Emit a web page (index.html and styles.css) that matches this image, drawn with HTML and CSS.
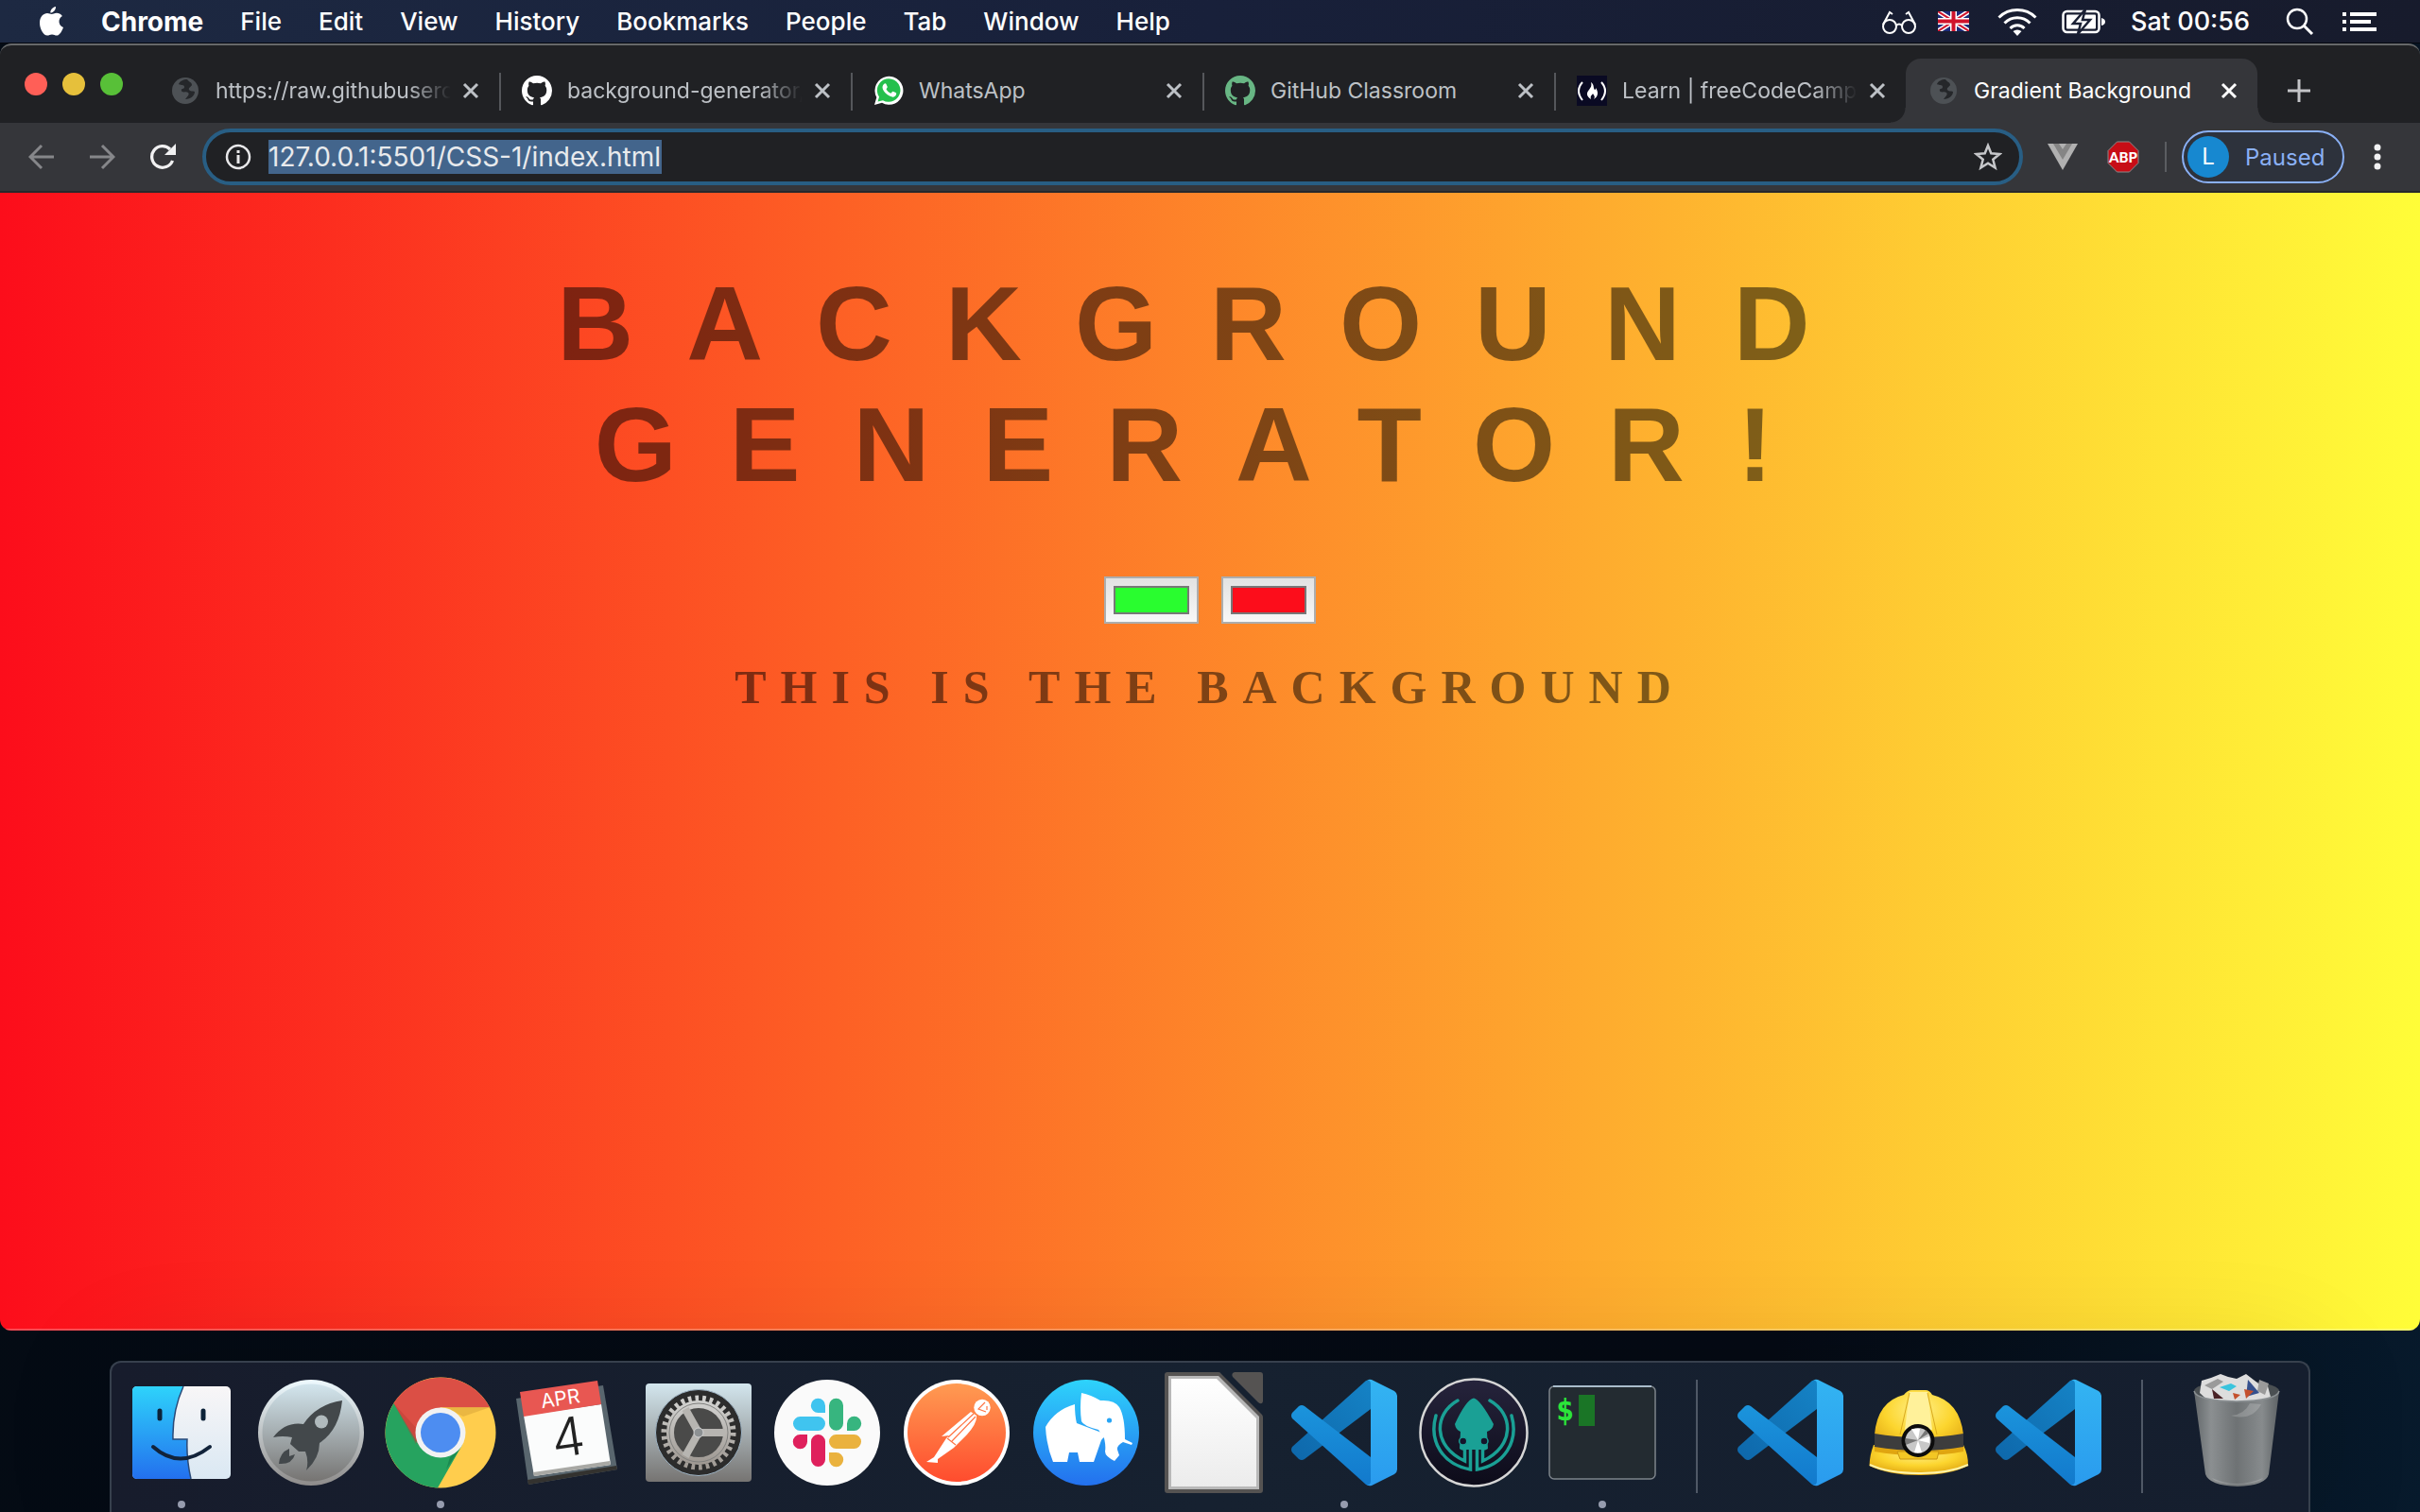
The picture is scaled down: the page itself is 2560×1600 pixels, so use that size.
FILE: index.html
```html
<!DOCTYPE html>
<html lang="en">
<head>
<meta charset="utf-8">
<title>Gradient Background</title>
<link rel="stylesheet" href="styles.css">
</head>
<body>
<svg class="defs" aria-hidden="true">
  <defs>
    <linearGradient id="steel" x1="0" y1="0" x2="0" y2="1"><stop offset="0" stop-color="#d3e6ee"/><stop offset="1" stop-color="#767472"/></linearGradient>
    <linearGradient id="steelRim" x1="0" y1="0" x2="0" y2="1"><stop offset="0" stop-color="#eefaff"/><stop offset="1" stop-color="#8e8c8b"/></linearGradient>
    <linearGradient id="finderBlue" x1="0" y1="0" x2="0" y2="1"><stop offset="0" stop-color="#2ed3fb"/><stop offset="1" stop-color="#2370ee"/></linearGradient>
    <linearGradient id="finderWhite" x1="0" y1="0" x2="0" y2="1"><stop offset="0" stop-color="#f8f6f7"/><stop offset="1" stop-color="#dae8f3"/></linearGradient>
    <linearGradient id="orange" x1="0" y1="0" x2="0" y2="1"><stop offset="0" stop-color="#ff9b52"/><stop offset="1" stop-color="#ff4c2e"/></linearGradient>
    <linearGradient id="codeBack" x1="1" y1="0" x2="0" y2="1"><stop offset="0" stop-color="#1583c6"/><stop offset="1" stop-color="#0e67aa"/></linearGradient>
    <linearGradient id="codeFront" x1="0" y1="0" x2="0" y2="1"><stop offset="0" stop-color="#1b94dc"/><stop offset="1" stop-color="#1279cc"/></linearGradient>
    <linearGradient id="codeSide" x1="0" y1="0" x2="0" y2="1"><stop offset="0" stop-color="#33b4f2"/><stop offset="1" stop-color="#2a9bee"/></linearGradient>
    <linearGradient id="night" x1="0" y1="0" x2="0" y2="1"><stop offset="0" stop-color="#26243c"/><stop offset="1" stop-color="#0c0b19"/></linearGradient>
    <radialGradient id="helmet" cx=".5" cy=".3" r=".7"><stop offset="0" stop-color="#fff08a"/><stop offset=".55" stop-color="#fcd52e"/><stop offset="1" stop-color="#e0a510"/></radialGradient>
    <linearGradient id="bin" x1="0" y1="0" x2="1" y2="0"><stop offset="0" stop-color="#62676a"/><stop offset=".2" stop-color="#8b8f91"/><stop offset=".5" stop-color="#6e7274"/><stop offset=".8" stop-color="#878b8d"/><stop offset="1" stop-color="#5d6265"/></linearGradient>
    <linearGradient id="paper" x1="0" y1="0" x2="0" y2="1"><stop offset="0" stop-color="#fff"/><stop offset="1" stop-color="#ececec"/></linearGradient>
    <linearGradient id="gear" x1="0" y1="0" x2="0" y2="1"><stop offset="0" stop-color="#d0d0ce"/><stop offset="1" stop-color="#a09a94"/></linearGradient>
    <symbol id="globe" viewBox="0 0 32 32"><circle cx="16" cy="16" r="14" fill="currentColor"/><path class="globe-land" d="M18 4c-4 0-8 2-9 5 2 2 6 0 6 3s-4 1-3 4 5 0 7 2-1 4-3 7c6 0 10-4 10-8-2-1-5 0-6-2s2-3 3-5c0-3-3-3-5-6z"/></symbol>
    <symbol id="octocat" viewBox="0 0 16 16"><path fill="currentColor" d="M8 0C3.58 0 0 3.58 0 8c0 3.54 2.29 6.53 5.47 7.59.4.07.55-.17.55-.38 0-.19-.01-.82-.01-1.49-2.01.37-2.53-.49-2.69-.94-.09-.23-.48-.94-.82-1.13-.28-.15-.68-.52-.01-.53.63-.01 1.08.58 1.23.82.72 1.21 1.87.87 2.33.66.07-.52.28-.87.51-1.07-1.78-.2-3.64-.89-3.64-3.95 0-.87.31-1.59.82-2.15-.08-.2-.36-1.02.08-2.12 0 0 .67-.21 2.2.82.64-.18 1.32-.27 2-.27s1.36.09 2 .27c1.53-1.04 2.2-.82 2.2-.82.44 1.1.16 1.92.08 2.12.51.56.82 1.27.82 2.15 0 3.07-1.87 3.75-3.65 3.95.29.25.54.73.54 1.48 0 1.07-.01 1.93-.01 2.2 0 .21.15.46.55.38A8.01 8.01 0 0 0 16 8c0-4.42-3.58-8-8-8z"/></symbol>
    <symbol id="cross" viewBox="0 0 20 20"><path d="M3 3l14 14M17 3L3 17" stroke="currentColor" stroke-width="3"/></symbol>
    <symbol id="vscode" viewBox="0 0 128 128">
      <path fill="url(#codeBack)" d="M87 9L9 79q-2 3 0 6l7 7q3 2 6 0l70-53V8z"/>
      <path fill="url(#codeFront)" d="M22 36q-3-2-6 0l-7 7q-2 3 0 6l78 70q3 2 5 0V90z"/>
      <path fill="url(#codeSide)" d="M88 9q2-2 5-1l24 12q3 2 3 5v78q0 3-3 5l-24 12q-3 1-5-1 4 1 4-4V13q0-5-4-4z"/>
    </symbol>
  </defs>
</svg>

<header class="menubar">
  <nav class="menus" aria-label="Menu bar">
    <svg class="apple" viewBox="0 0 27 33"><path fill="#fff" d="M18 1c.3 3-2.600 6.500-5.600 6.600C12 4.600 15 1.300 18 1zM13.500 9c1.400 0 3-1.300 5.500-1.300 2 0 4.400 1 5.900 3.200-5 2.800-4.300 9.900 1.100 12-1.200 3.500-4 8.600-7 8.700-2 0-2.700-1.200-5-1.200s-3.100 1.200-5 1.200C5 31.600 1 24.500 1 18.200 1 11.500 5.200 8 9 8c2 0 3.500 1 4.500 1z"/></svg>
    <a href="#" class="app">Chrome</a><a href="#">File</a><a href="#">Edit</a><a href="#">View</a><a href="#">History</a><a href="#">Bookmarks</a><a href="#">People</a><a href="#">Tab</a><a href="#">Window</a><a href="#">Help</a>
  </nav>
  <div class="status">
    <svg width="38" height="28" viewBox="0 0 38 28" fill="none" stroke="#fff" stroke-width="2"><circle cx="9" cy="19" r="7"/><circle cx="29" cy="19" r="7"/><path d="M16 18q3-3 6 0M2 17L9 4l3 2M36 17L29 4l-3 2"/></svg>
    <svg class="flag" width="33" height="21" viewBox="0 0 33 21"><path fill="#1c2b7a" d="M0 0h33v21H0z"/><path stroke="#fff" stroke-width="5" d="M0 0l33 21M33 0L0 21"/><path stroke="#d0142c" stroke-width="2" d="M0 0l33 21M33 0L0 21"/><path stroke="#fff" stroke-width="7" d="M16.500 0v21M0 10.500h33"/><path stroke="#d0142c" stroke-width="4" d="M16.500 0v21M0 10.500h33"/></svg>
    <svg class="wifi" width="42" height="30" viewBox="0 0 42 30" fill="none" stroke="#fff" stroke-width="3"><path d="M1.500 10.500a28 28 0 0 1 39 0M7.500 16.500a19 19 0 0 1 27 0M13.500 22a10.500 10.500 0 0 1 15 0"/><path fill="#fff" stroke="none" d="M16.500 25q4.500-3 9 0L21 30z"/></svg>
    <svg class="battery" width="46" height="26" viewBox="0 0 46 26"><rect x="1.500" y="2" width="38" height="22" rx="4" fill="none" stroke="#fff" stroke-width="2.500"/><rect x="5" y="5.500" width="31" height="15" rx="1" fill="#fff"/><path fill="#fff" d="M42 9q4 1 4 4t-4 4z"/><path fill="#fff" stroke="#1a2034" stroke-width="2.500" d="M25 0L12 15h8l-3 11L30 11h-8z"/></svg>
    <time>Sat 00:56</time>
    <svg class="search" width="30" height="30" viewBox="0 0 30 30" fill="none" stroke="#fff" stroke-width="2.500"><circle cx="12" cy="12" r="10"/><path d="M19 19l9 9" stroke-width="3"/></svg>
    <svg width="36" height="22" viewBox="0 0 36 22" stroke="#fff" stroke-width="4"><path d="M0 3h4M8 3h28M0 11h4M8 11h22M0 19h4M8 19h28"/></svg>
  </div>
</header>

<main class="window">
  <div class="tabstrip">
    <div class="lights"><button class="red" aria-label="Close window"></button><button class="amber" aria-label="Minimise"></button><button class="green" aria-label="Zoom"></button></div>
    <div class="tab"><svg class="fav globe"><use href="#globe"/></svg><span class="label fade">https://raw.githubuserc</span><button aria-label="Close tab"><svg><use href="#cross"/></svg></button></div>
    <div class="tab"><svg class="fav white"><use href="#octocat"/></svg><span class="label fade">background-generator,</span><button aria-label="Close tab"><svg><use href="#cross"/></svg></button></div>
    <div class="tab"><svg class="fav" viewBox="0 0 32 32"><path fill="#fff" d="M1 31l2.300-8A15 15 0 1 1 9 28.800z"/><path fill="#25c04d" d="M4.500 27.500l1.500-5a12.300 12.300 0 1 1 4 3.700z"/><path fill="#fff" d="M11 9c1-1 2-1 2.500 0l1.200 2.800c.2.500 0 1-1.200 2.400 1 2 2.800 3.600 5 4.500 1.200-1.500 1.600-2.200 2.200-2l3.300 1.600c.6.500 0 3-1.500 3.800-2 1.200-5 .3-8-2-3-2.500-5-5.500-5-7.600 0-1.500.7-2.700 1.500-3.500z"/></svg><span class="label">WhatsApp</span><button aria-label="Close tab"><svg><use href="#cross"/></svg></button></div>
    <div class="tab"><svg class="fav mint"><use href="#octocat"/></svg><span class="label">GitHub Classroom</span><button aria-label="Close tab"><svg><use href="#cross"/></svg></button></div>
    <div class="tab last"><svg class="fav" viewBox="0 0 32 32"><path fill="#0a0a23" d="M0 0h32v32H0z"/><path fill="none" stroke="#fff" stroke-width="2" d="M6 7q-8 9 0 19M26 7q8 9 0 19"/><path fill="#fff" d="M15 7c4 3 2 6 4 8 1 0 1-1 1-2 3 4 3 9-2 12 2-3 0-4-1-6-1 2-3 2-2 6-5-3-5-7-2-10 2-3 3-4 2-8z"/></svg><span class="label fade">Learn | freeCodeCamp</span><button aria-label="Close tab"><svg><use href="#cross"/></svg></button></div>
    <div class="tab active"><svg class="fav globe"><use href="#globe"/></svg><span class="label">Gradient Background</span><button aria-label="Close tab"><svg><use href="#cross"/></svg></button></div>
    <button class="newtab" aria-label="New tab"><svg width="24" height="24" viewBox="0 0 24 24"><path d="M12 0v24M0 12h24" stroke="#c3c4c7" stroke-width="3"/></svg></button>
  </div>

  <div class="toolbar">
    <button class="tool" aria-label="Back"><svg width="28" height="28" viewBox="0 0 28 28" fill="none" stroke="#86878a" stroke-width="3"><path d="M27 14H3M14 2L2 14l12 12"/></svg></button>
    <button class="tool" aria-label="Forward"><svg width="28" height="28" viewBox="0 0 28 28" fill="none" stroke="#86878a" stroke-width="3"><path d="M1 14h24M14 2l12 12-12 12"/></svg></button>
    <button class="tool" aria-label="Reload"><svg width="28" height="28" viewBox="0 0 28 28"><path fill="none" stroke="#f1f1f2" stroke-width="3.300" d="M24.500 18A11.300 11.300 0 1 1 22 6"/><path fill="#f1f1f2" d="M28 0v12H16z"/></svg></button>
    <div class="omnibox">
      <svg class="info" width="28" height="28" viewBox="0 0 28 28"><circle cx="14" cy="14" r="12" fill="none" stroke="#e8e8ea" stroke-width="2.500"/><path d="M14 12v9M14 7v3" stroke="#e8e8ea" stroke-width="3"/></svg>
      <input type="text" aria-label="Address" value="127.0.0.1:5501/CSS-1/index.html">
      <button class="star" aria-label="Bookmark this page"><svg width="30" height="30" viewBox="0 0 30 30"><path fill="none" stroke="#c6c7ca" stroke-width="2.500" d="M15 3l3.300 8.300 9 .7-7 5.800 2.300 8.700L15 21.700l-7.600 4.800 2.300-8.700-7-5.800 9-.7z"/></svg></button>
    </div>
    <button class="tool" aria-label="Vue extension"><svg width="32" height="28" viewBox="0 0 32 28"><path fill="#b1b1b1" d="M0 0h32L16 28z"/><path fill="#858585" d="M6 0h20L16 17z"/><path fill="#b1b1b1" d="M12 0h8l-4 6z"/></svg></button>
    <button class="tool" aria-label="Adblock Plus"><svg width="34" height="34" viewBox="0 0 34 34"><path fill="#c70d16" stroke="#8a8a8a" d="M10.500 1h13L33 10.500v13L23.500 33h-13L1 23.500v-13z"/><text x="17" y="23" text-anchor="middle" class="abp">ABP</text></svg></button>
    <span class="rule"></span>
    <button class="profile"><span class="avatar">L</span><span>Paused</span></button>
    <button class="tool kebab" aria-label="Menu"><svg width="8" height="28" viewBox="0 0 8 28" fill="#f1f1f2"><circle cx="4" cy="4" r="3.500"/><circle cx="4" cy="14" r="3.500"/><circle cx="4" cy="24" r="3.500"/></svg></button>
  </div>

  <section class="page">
    <h1>BACKGROUND GENERATOR!</h1>
    <div class="pickers">
      <input type="color" aria-label="First colour" value="#29fd2f">
      <input type="color" aria-label="Second colour" value="#fc0d1b">
    </div>
    <h3>THIS IS THE BACKGROUND</h3>
  </section>
</main>

<footer class="dock">
  <a href="#" class="app-icon running" aria-label="Finder"><svg viewBox="0 0 128 128"><rect x="12" y="15" width="104" height="98" rx="5" fill="url(#finderWhite)"/><path fill="url(#finderBlue)" d="M17 15h49Q54 42 55 71h15q-1 20 4 42H17q-5 0-5-5V20q0-5 5-5z"/><path fill="none" stroke="#2a4a78" stroke-width="1.500" d="M66 15Q54 42 55 71h15q-1 20 4 42"/><path fill="none" stroke="#0c2238" stroke-width="5" stroke-linecap="round" d="M41 41v8M87 41v8"/><path fill="none" stroke="#12233a" stroke-width="4" stroke-linecap="round" d="M34 79q28 25 60 0"/></svg></a>
  <a href="#" class="app-icon" aria-label="Launchpad"><svg viewBox="0 0 128 128"><circle cx="64" cy="64" r="56" fill="url(#steelRim)"/><circle cx="64" cy="64" r="51.500" fill="url(#steel)"/><path fill="#43484b" d="M97 30Q70 34 56 55 37 52 24 69q10-2 20 0l-2 7 9 8 7 0q4 10 1 20 14-13 14-29Q94 61 97 30z"/><path fill="#43484b" d="M41 81q-10 4-11 16 14 1 17-10l-6 2z"/><circle cx="75" cy="52.500" r="7" fill="#b0babd"/></svg></a>
  <a href="#" class="app-icon running" aria-label="Chrome"><svg viewBox="0 0 128 128"><circle cx="64" cy="64" r="58.500" fill="#ffcd4d"/><path fill="#26a35f" d="M14.500 33A58.500 58.500 0 0 0 61 122.400L87 77 64 64z"/><path fill="#1c8a50" d="M70 103l14.500-22L74 90z"/><path fill="#db4f45" d="M14.500 33A58.500 58.500 0 0 1 116 37.300H64L41 77z"/><path fill="#b93d33" opacity=".45" d="M14.500 33L38 76l3-14z"/><path fill="#d6a137" opacity=".5" d="M70 37.300h46L88 47z"/><circle cx="64" cy="64" r="26.500" fill="#f2f2f2"/><circle cx="64" cy="64" r="21" fill="#4d8df1"/></svg></a>
  <a href="#" class="app-icon" aria-label="Calendar"><svg viewBox="0 0 128 128"><path fill="#59666e" d="M8 28l92-14 15 89-94 16z"/><path fill="#33322f" d="M20 114l94-15 1 4-94 16z"/><path fill="#fbfcfc" d="M16 46l82-12 10 64-81 12z"/><path fill="#a8a8a4" d="M26 106l81-12 1 4-81 12z"/><path fill="#e85752" d="M12 21L94 9l4 25-82 13z"/><g transform="rotate(-8.500 58 50)"><text x="58" y="35" text-anchor="middle" class="cal-month">APR</text><text x="60" y="89" text-anchor="middle" class="cal-day">4</text></g></svg></a>
  <a href="#" class="app-icon" aria-label="System Preferences"><svg viewBox="0 0 128 128"><rect x="8" y="12" width="112" height="104" rx="4" fill="url(#steel)"/><circle cx="64" cy="64" r="45.500" fill="#2c2c2c" stroke="#9fb4c4"/><circle cx="64" cy="64" r="36.500" fill="none" stroke="url(#gear)" stroke-width="6" stroke-dasharray="3.645 4"/><circle cx="64" cy="64" r="30" fill="#4a4a49" stroke="url(#gear)" stroke-width="8"/><circle cx="64" cy="64" r="31" fill="none" stroke="#80807e"/><path stroke="#b7b5b1" stroke-width="8" d="M64 64h28M64 64L50 39M64 64L50 89"/><circle cx="64" cy="64" r="5" fill="#8d9193" stroke="#d2d2d2"/></svg></a>
  <a href="#" class="app-icon" aria-label="Slack"><svg viewBox="0 0 128 128"><circle cx="64" cy="64" r="56" fill="#fafafa"/><path fill="#40c4ef" d="M62 43h-7.500A7.600 7.600 0 1 1 62 35.400zM35.500 47h19a7.500 7.500 0 0 1 0 15h-19a7.500 7.500 0 0 1 0-15z"/><path fill="#37b57f" d="M66 35.300a7.500 7.500 0 0 1 15 0v19a7.500 7.500 0 0 1-15 0zM85 62v-7.500a7.600 7.600 0 1 1 7.600 7.500z"/><path fill="#df205c" d="M43 66v7.500A7.600 7.600 0 1 1 35.400 66zM47 73.500a7.500 7.500 0 0 1 15 0v19a7.500 7.500 0 0 1-15 0z"/><path fill="#eab23e" d="M73.500 66h19a7.500 7.500 0 0 1 0 15h-19a7.500 7.500 0 0 1 0-15zM66 85h7.500a7.600 7.600 0 1 1-7.500 7.600z"/></svg></a>
  <a href="#" class="app-icon" aria-label="Postman"><svg viewBox="0 0 128 128"><circle cx="64" cy="64" r="56" fill="#fff"/><circle cx="64" cy="64" r="52" fill="url(#orange)"/><circle cx="91" cy="37.500" r="8.700" fill="#fff"/><path fill="#fff" d="M79 42l6 4q1 8-10 20L61 80 44 92v4l-12-1 8-5 13-20 3-3-8 1z"/><path fill="none" stroke="#fe7444" stroke-width="1.200" d="M82 44L55 69M84 47L59 73M54 70l9 7M94 32l-7 7 8 3M96 36v4"/></svg></a>
  <a href="#" class="app-icon" aria-label="TablePlus"><svg viewBox="0 0 128 128"><circle cx="64" cy="64" r="56" fill="url(#finderBlue)"/><path fill="#fff" d="M21 58Q31 40 52 34q0 12 2 20l21 8q6 2 10 4l-5 6-8 23H57l-2-10H46l-2 10H29Q22 78 21 58z"/><path fill="#fff" d="M59 22q10 2 20 8 15-1 20 7 6 10 6 34l8 4-1 2-9-3q-7 4-6 8l2 6-5 6q-10-5-10-10 1-6-1-14l-6-9Q61 57 59 52q-2-14 0-30z"/><circle cx="88.500" cy="51" r="2.600" fill="#27a5f5"/></svg></a>
  <a href="#" class="app-icon" aria-label="LibreOffice"><svg viewBox="0 0 128 128"><path fill="#555352" d="M14 0h54q2 0 3 2l43 43q1 1 1 3v77q0 3-3 3H14q-3 0-3-3V3q0-3 3-3zM85 0h27q3 0 3 3v28q-1 4-5 1L83 5q-2-4 2-5z"/><path fill="#b8b8b8" d="M15 4h53l43 43v77H15z"/><path fill="url(#paper)" d="M18 7h48l42 42v72H18z"/></svg></a>
  <a href="#" class="app-icon running" aria-label="Visual Studio Code"><svg><use href="#vscode"/></svg></a>
  <a href="#" class="app-icon" aria-label="GitKraken"><svg viewBox="0 0 128 128"><circle cx="64" cy="64" r="56.500" fill="url(#night)" stroke="#d6d6d6" stroke-width="2.500"/><path fill="#1aa095" d="M64 27.500Q71 29 85 55q-1 6-7 8l1 18q-4 3-7 1H56q-4 2-7-1l1-18q-5-2-6-8 12-26 20-27.500z"/><g fill="none" stroke="#1aa095" stroke-width="3.500"><path stroke-linecap="round" d="M47 30C22 44 20 78 54.500 94V80M81 30c25 14 27 48-7.500 64V80M24 46c-8 28 8 52 36.500 57V80M104 46c8 28-8 52-36.500 57V80"/></g><circle cx="52.700" cy="73" r="4" fill="#15142a" stroke="#1aa095" stroke-width="1.500"/><circle cx="75" cy="73" r="4" fill="#15142a" stroke="#1aa095" stroke-width="1.500"/></svg></a>
  <a href="#" class="app-icon running" aria-label="Terminal"><svg viewBox="0 0 128 128"><rect x="8" y="15" width="112" height="98" rx="5" fill="#232b31" stroke="#7d848b" stroke-width="1.500"/><path stroke="#a9bccb" stroke-width="2" d="M12 15h104"/><text x="15" y="51" class="prompt">$</text><path fill="#1a7526" d="M39 24h17v33H39z"/></svg></a>
  <span class="divider"></span>
  <a href="#" class="app-icon" aria-label="Visual Studio Code window"><svg><use href="#vscode"/></svg></a>
  <a href="#" class="app-icon" aria-label="Mining helmet"><svg viewBox="0 0 128 128"><path fill="url(#helmet)" d="M16 77q-4 10-4.500 22 20 10 52.500 10t52-10q0-12-5-22z"/><path fill="none" stroke="#fff3a8" stroke-width="2" d="M12 98q20 9 52 9t52-9"/><path fill="url(#helmet)" d="M17 66Q20 31 48 24q4-5 8-5h15q4 0 7 5 29 7 33 42v18q-20 4-47 4t-47-4z"/><path fill="#fff19a" d="M54 21h19l5 40H49z"/><path fill="none" stroke="#d9a91c" d="M54 22L44 66M73 22l10 44"/><path fill="#3d3d3d" d="M17 65q46 8 94 0v14q-46 8-94 0z"/><path fill="#f3c724" stroke="#c99614" d="M41 84h44l-2 8H44z"/><circle cx="63" cy="72.500" r="15.500" fill="#c8c8c8" stroke="#0c0c0c" stroke-width="4"/><path fill="#fff" d="M63 72L56 60h9zM63 72l12-4v7zM63 72l-4 13h8z"/><path fill="#777" d="M63 72l-13-2v7zM63 72l8-11 3 4z"/></svg></a>
  <a href="#" class="app-icon" aria-label="Visual Studio Code window"><svg><use href="#vscode"/></svg></a>
  <span class="divider"></span>
  <a href="#" class="app-icon" aria-label="Trash"><svg viewBox="0 0 128 128"><ellipse cx="64" cy="20" rx="45" ry="11" fill="#4a4f52"/><path fill="#ddd" d="M25 22l2-13 10-3 10-4 8 3 9 2 10-5 13 10 10 3 4 15-15 6H40z"/><path fill="#9a9a9a" d="M30 14l14-7 6 3-12 8zM88 8l10 4-4 12-8-4z"/><path fill="#39c4dd" d="M46 16l12-4 6 3-8 5z"/><path fill="#4a2226" d="M38 18l12 10H40z"/><path fill="#35508d" d="M76 8l12 14-14 4z"/><path fill="#c4502d" d="M72 18l10 2-8 8zM60 22l8 2-6 5z"/><path fill="url(#bin)" d="M19 20q2 10 45 11 43-1 45-11L98 108q-3 12-33 13-30-1-34-13z"/><path fill="none" stroke="#8b9093" stroke-width="1.500" d="M19 20q2 10 45 11 43-1 45-11"/><path fill="#fff" opacity=".18" d="M90 34Q80 52 58 46q14-1 20-13zM38 112q26 12 54 0-5 6-28 7-22-1-26-7z"/></svg></a>
</footer>
</body>
</html>
```
FILE: styles.css
```css
* { box-sizing: border-box; }

body {
  margin: 0;
  min-height: 100vh;
  display: flex;
  flex-direction: column;
  background: linear-gradient(100deg, #040b14 0%, #050a14 75%, #071a2c 100%);
  color: #fff;
  font-family: Inter, "Liberation Sans", sans-serif;
}

.defs { position: absolute; width: 0; height: 0; }
svg { display: block; flex: none; }
a { color: inherit; text-decoration: none; }

button {
  margin: 0;
  padding: 0;
  border: 0;
  background: none;
  color: inherit;
  font: inherit;
}

/* Menu bar */
.menubar {
  display: flex;
  justify-content: space-between;
  align-items: center;
  height: 46px;
  padding: 0 46px 0 41px;
  border-bottom: 1px solid #05080f;
  background: linear-gradient(90deg, #1d2942, #18203a 50%, #171b2c);
  font-size: 27px;
  font-weight: 500;
  white-space: nowrap;
}
.menus { display: flex; align-items: center; gap: 39px; font-size: 26px; }
.apple { width: 27px; height: 33px; }
.app { font-size: 28px; font-weight: 700; }
.status { display: flex; align-items: center; }
.flag { margin-left: 22px; }
.wifi { margin-left: 30px; }
.battery { margin-left: 26px; }
.status time { margin-left: 27px; }
.search { margin: 0 30px 0 38px; }

/* Browser window */
.window {
  flex: 1;
  display: flex;
  flex-direction: column;
  margin-bottom: 32px;
  overflow: hidden;
  border-top: 2px solid #66686a;
  border-radius: 12px;
  background: #202124;
}

.tabstrip {
  display: flex;
  align-items: flex-end;
  height: 82px;
  font-size: 23px;
  color: #bdc1c6;
}
.lights {
  display: flex;
  gap: 16px;
  align-self: center;
  width: 156px;
  padding-left: 26px;
}
.lights button { width: 24px; height: 24px; border-radius: 50%; }
.lights .red { background: #ff5f57; }
.lights .amber { background: #e6c03b; }
.lights .green { background: #58c038; }

.tab {
  position: relative;
  display: flex;
  align-items: center;
  flex: 0 1 372px;
  min-width: 0;
  height: 68px;
  padding: 0 20px 0 24px;
}
.tab::after {
  content: "";
  position: absolute;
  right: -2px;
  top: 15px;
  width: 2px;
  height: 40px;
  background: #55575b;
}
.tab.last::after { display: none; }
.fav { width: 32px; height: 32px; margin-right: 16px; }
.fav.globe { color: #4d5155; }
.fav.white { color: #fff; }
.fav.mint { color: #68b684; }
.globe-land { fill: #25272a; }
.active .globe-land { fill: #35363a; }
.label {
  flex: 1;
  min-width: 0;
  margin-right: 6px;
  white-space: nowrap;
}
.label.fade {
  -webkit-mask-image: linear-gradient(90deg, #000 80%, transparent 98%);
  mask-image: linear-gradient(90deg, #000 80%, transparent 98%);
}
.tab svg:not(.fav) { width: 20px; height: 20px; }
.tab.active {
  border-radius: 16px 16px 0 0;
  background: #35363a;
  color: #fff;
}
.tab.active::before,
.tab.active::after {
  content: "";
  display: block;
  position: absolute;
  top: auto;
  bottom: 0;
  width: 16px;
  height: 16px;
}
.tab.active::before { left: -16px; background: radial-gradient(circle at 0 0, #202124 15px, #35363a 16px); }
.tab.active::after { right: -16px; background: radial-gradient(circle at 100% 0, #202124 15px, #35363a 16px); }
.newtab { margin-left: 32px; height: 68px; }

.toolbar {
  display: flex;
  align-items: center;
  height: 74px;
  padding: 0 13px 0 12px;
  border-bottom: 2px solid #27282b;
  background: #35363a;
}
.tool { display: grid; place-items: center; width: 64px; height: 56px; }
.omnibox {
  flex: 1;
  display: flex;
  align-items: center;
  height: 60px;
  margin: 0 10px;
  padding: 0 18px 0 20px;
  border: 4px solid #285e84;
  border-radius: 30px;
  background: #202124;
}
.omnibox input {
  width: 416px;
  height: 36px;
  margin: 0 auto 0 18px;
  padding: 0;
  border: 0;
  outline: 0;
  background: #43658c;
  color: #e8eaed;
  font: 28px Inter, "Liberation Sans", sans-serif;
}
.abp { font: 900 15px Lato, "Liberation Sans", sans-serif; fill: #fff; }
.rule { width: 2px; height: 32px; margin: 0 16px 0 12px; background: #5b5d61; }
.profile {
  display: flex;
  align-items: center;
  gap: 17px;
  width: 172px;
  height: 56px;
  padding-left: 4px;
  border: 2px solid #8ab0f5;
  border-radius: 28px;
  background: #2d323c;
  color: #8ab0f5;
  font-size: 24px;
}
.avatar {
  width: 44px;
  height: 44px;
  border-radius: 50%;
  background: #1788d0;
  color: #fff;
  font-size: 24px;
  line-height: 44px;
  text-align: center;
}
.kebab { margin-left: 3px; }

/* Web page */
.page {
  flex: 1;
  padding-top: 75px;
  border-bottom: 2px solid rgba(255, 255, 255, .25);
  background: linear-gradient(90deg, #fc0d1b, #fffd38) border-box;
  color: rgba(0, 0, 0, .5);
  text-align: center;
}
.page h1 {
  margin: 0;
  font: bold 112px/128px "Liberation Sans", Arial, sans-serif;
  letter-spacing: 56px;
}
.page h3 {
  margin: 38px 0 0;
  font: bold 50px/58px "Liberation Serif", "Times New Roman", serif;
  letter-spacing: 15px;
}
.pickers { display: flex; justify-content: center; gap: 24px; margin-top: 75px; }
.pickers input {
  appearance: none;
  width: 100px;
  height: 50px;
  padding: 8px;
  border: 2px solid #adadad;
  background: linear-gradient(#e2e2e2, #f8f8f8);
}
.pickers input::-webkit-color-swatch-wrapper { padding: 0; }
.pickers input::-webkit-color-swatch { border: 2px solid #777; border-radius: 0; }

/* Dock */
.dock {
  position: relative;
  display: flex;
  height: 160px;
  margin: 0 116px;
  padding: 10px 8px 0 6px;
  border: 2px solid #37404d;
  border-bottom: 0;
  border-radius: 12px 12px 0 0;
  background: linear-gradient(90deg, #171c2c, #162130 50%, #151e2e);
  box-shadow: 0 0 120px rgba(0, 0, 0, .12);
}
.app-icon {
  position: relative;
  flex: 1;
  display: flex;
  justify-content: center;
}
.app-icon svg { width: 128px; height: 128px; }
.running::after {
  content: "";
  position: absolute;
  bottom: 4px;
  width: 8px;
  height: 8px;
  border-radius: 50%;
  background: #969cae;
}
.divider { width: 2px; height: 120px; margin: 8px 30px 0; background: #4f5866; }
.cal-month { font: 400 21px Inter, sans-serif; fill: #fff; }
.cal-day { font: 300 56px Inter, sans-serif; fill: #222; }
.prompt { font: 700 32px "DejaVu Sans Mono", monospace; fill: #2be53a; }
```
